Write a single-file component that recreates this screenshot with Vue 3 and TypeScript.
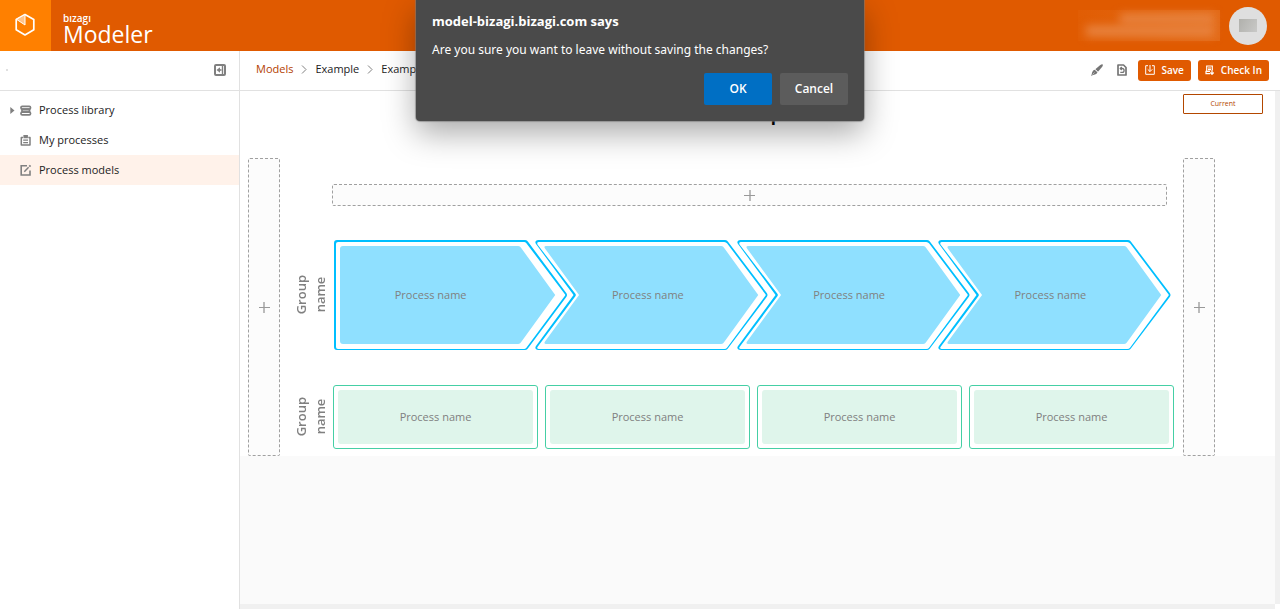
<script setup lang="ts">
interface Chevron {
  outer: string
  gap: string
  fill: string
}

const startShape: Chevron = {
  outer: 'M3 0H191Q193 0 194 2L232 53Q233.500 55 232 57L194 108Q193 110 191 110H3Q0 110 0 107V3Q0 0 3 0Z',
  gap: 'M4 2H190Q191 2 192 3L230.500 54Q231.500 55 230.500 56L192 108Q191 109 190 109H4Q2 109 2 107V4Q2 2 4 2Z',
  fill: 'M9 6H184Q186 6 187 8L221 55L187 102Q186 104 184 104H9Q6 104 6 101V9Q6 6 9 6Z'
}

const nextShape: Chevron = {
  outer: 'M3 0H190Q192 0 193 2L231.500 53Q233 55 231.500 57L193 108Q192 110 190 110H3Q-1 109.500 1 106L38.500 55L1 4Q-1 0.500 3 0Z',
  gap: 'M4 2H189Q191 2 192 3.500L230 54Q231 55 230 56L192 107.500Q191 109 189 109H4Q1.500 109 2.500 107L40.500 56Q41 55 40.500 54L2.500 4.500Q1.500 2 4 2Z',
  fill: 'M11 6H186Q188 6 189 8L223 55L189 102Q188 104 186 104H11Q8.500 104 10 101.500L44 55L10 8.500Q8.500 6 11 6Z'
}

const chevrons = [startShape, nextShape, nextShape, nextShape].map((shape, id) => ({
  id,
  shape,
  name: 'Process name'
}))

const boxes = [0, 1, 2, 3].map((id) => ({ id, name: 'Process name' }))
</script>

<template>
  <div class="app">
    <header class="topbar">
      <a class="logo" href="#" aria-label="Home">
        <svg width="20" height="24" viewBox="0 0 20 24" fill="none">
          <path d="M10 1.500L18.800 6.500V16.700L10 22L1.200 16.700V6.500Z" stroke="#fff" stroke-width="1.700" stroke-linejoin="round" />
          <path d="M1.500 6.300L10 1.500V12Z" fill="#ffc48a" stroke="#fff" stroke-width="1" stroke-linejoin="round" />
        </svg>
      </a>
      <div class="brand">
        <span class="brand-small">bızagı</span>
        <span class="brand-name">Modeler</span>
      </div>
      <div class="account">
        <div class="masked"><i class="line short"></i><i class="line long"></i></div>
        <div class="avatar"><i></i></div>
      </div>
    </header>

    <div class="body">
      <nav class="sidebar">
        <div class="side-head">
          <i class="dot"></i>
          <button class="icon-btn" type="button" aria-label="Collapse panel">
            <svg width="12" height="12" viewBox="0 0 12 12" fill="none" stroke="#808080">
              <rect x="1" y="1" width="10" height="10" rx="1" stroke-width="2" />
              <path d="M8.500 1V11" stroke-width="1.400" />
              <path d="M7.500 6H4" stroke-width="1.600" />
              <path d="M6 3.300V8.700L2.500 6Z" fill="#808080" stroke="none" />
            </svg>
          </button>
        </div>
        <ul class="menu">
          <li>
            <a href="#">
              <svg class="caret" width="5" height="8" viewBox="0 0 5 8"><path d="M0.300 1L4.500 4.500L0.300 8Z" fill="#808080" /></svg>
              <svg class="glyph" width="12" height="12" viewBox="0 0 12 12" fill="none" stroke="#808080" stroke-width="1.700">
                <rect x="1" y="2.300" width="9.500" height="2.800" rx="1.200" />
                <rect x="2" y="5.100" width="7.500" height="3" fill="#b5b5b5" />
                <rect x="1" y="8.100" width="9.500" height="2.800" rx="1.200" />
              </svg>
              <span>Process library</span>
            </a>
          </li>
          <li>
            <a href="#">
              <i class="caret"></i>
              <svg class="glyph" width="12" height="12" viewBox="0 0 12 12" fill="none" stroke="#808080">
                <path d="M3 3.500H1.300V11H10V3.500H8.300" stroke-width="1.500" stroke-linejoin="round" />
                <path d="M4 3.600V1.600H7.300V3.600Z" stroke-width="1.200" fill="#808080" />
                <path d="M3.200 6.200H8M3.200 8.600H8" stroke-width="1.300" />
              </svg>
              <span>My processes</span>
            </a>
          </li>
          <li class="active">
            <a href="#">
              <i class="caret"></i>
              <svg class="glyph" width="12" height="12" viewBox="0 0 12 12" fill="none" stroke="#808080">
                <path d="M7 1.700H1.200V11H10V6.500" stroke-width="1.600" />
                <path d="M4.300 7.800L8.600 3.300" stroke-width="1.500" />
                <path d="M9.300 2.600L10.500 1.300" stroke-width="1.800" />
              </svg>
              <span>Process models</span>
            </a>
          </li>
        </ul>
      </nav>

      <main class="main">
        <div class="toolbar">
          <nav class="crumbs" aria-label="Breadcrumb">
            <a class="root" href="#">Models</a>
            <svg width="6" height="9" viewBox="0 0 6 9" fill="none" stroke="#808080"><path d="M1 0.500L5 4.500L1 8.500" /></svg>
            <a href="#">Example</a>
            <svg width="6" height="9" viewBox="0 0 6 9" fill="none" stroke="#808080"><path d="M1 0.500L5 4.500L1 8.500" /></svg>
            <a href="#">Example</a>
          </nav>
          <div class="actions">
            <button class="icon-btn" type="button" aria-label="Format">
              <svg width="12" height="12" viewBox="0 0 12 12" fill="#757575">
                <path d="M4.300 5.300L9 1.200Q11 -0.200 11.700 0.400Q12.300 1 11 3L7 7.700Z" />
                <path d="M3.800 5.800L6.500 8.300Q5.800 10.300 4 10.500Q2 10.800 0 12Q0.800 10.500 1.100 8.500Q1.800 6 3.800 5.800Z" />
                <path d="M1.500 10.500L3.500 8.500M4.300 5.700L6.700 8" stroke="#fff" stroke-width="0.500" />
              </svg>
            </button>
            <button class="icon-btn" type="button" aria-label="Document">
              <svg width="10" height="12" viewBox="0 0 10 12" fill="none" stroke="#757575">
                <path d="M1 1H6.500L9 3.500V11H1Z" stroke-width="1.700" stroke-linejoin="round" />
                <path d="M3.300 4.500H5.200A1.700 1.700 0 0 1 5.200 8.300H3.300M4.700 3L3.300 4.500L4.700 6" stroke-width="1.300" />
              </svg>
            </button>
            <button class="primary" type="button">
              <svg width="10" height="10" viewBox="0 0 10 10" fill="none" stroke="#fff">
                <path d="M3 0.700H0.700V9.300H9.300V0.700H7" />
                <path d="M5 0V6.500M2.700 4.300L5 6.600L7.300 4.300" />
              </svg>
              <span>Save</span>
            </button>
            <button class="primary" type="button">
              <svg width="10" height="10" viewBox="0 0 10 10" fill="none" stroke="#fff" stroke-width="1.200">
                <path d="M5 8.700H1V6.300H5M1.700 6V1H7.300V5M3 3H6M3 4.700H6" />
                <path d="M7 5V9M5.300 7.500L7 9.300L8.700 7.500" />
              </svg>
              <span>Check In</span>
            </button>
          </div>
        </div>

        <div class="viewport">
          <div class="canvas">
            <div class="canvas-head">
              <h1>Example</h1>
              <button class="current" type="button">Current</button>
            </div>
            <div class="board">
              <button class="add" type="button" aria-label="Add column before"><i class="plus"></i></button>
              <div class="groups">
                <button class="add add-row" type="button" aria-label="Add group"><i class="plus"></i></button>
                <section class="group">
                  <h2>Group<br />name</h2>
                  <div class="chevrons">
                    <div v-for="c in chevrons" :key="c.id" class="chevron">
                      <svg viewBox="0 0 233 110" preserveAspectRatio="none">
                        <path :d="c.shape.outer" fill="#00bfff" />
                        <path :d="c.shape.gap" fill="#fff" />
                        <path :d="c.shape.fill" fill="#8fe0ff" />
                      </svg>
                      <span>{{ c.name }}</span>
                    </div>
                  </div>
                </section>
                <section class="group second">
                  <h2>Group<br />name</h2>
                  <div class="boxes">
                    <div v-for="b in boxes" :key="b.id" class="box"><span>{{ b.name }}</span></div>
                  </div>
                </section>
              </div>
              <button class="add" type="button" aria-label="Add column after"><i class="plus"></i></button>
            </div>
          </div>
          <div class="track-v"></div>
          <div class="track-h"></div>
        </div>
      </main>
    </div>

    <div class="dialog" role="dialog" aria-labelledby="dialog-title">
      <h3 id="dialog-title">model-bizagi.bizagi.com says</h3>
      <p>Are you sure you want to leave without saving the changes?</p>
      <div class="dialog-actions">
        <button class="ok" type="button">OK</button>
        <button type="button">Cancel</button>
      </div>
    </div>
  </div>
</template>

<style>
body {
  margin: 0;
}
</style>

<style scoped>
* {
  box-sizing: border-box;
}

.app {
  position: relative;
  display: flex;
  flex-direction: column;
  min-height: 100vh;
  overflow: hidden;
  background: #fff;
  color: #222;
  font-family: 'Open Sans', 'Noto Sans', sans-serif;
  font-size: 11px;
  line-height: 16px;
}

a {
  color: inherit;
  text-decoration: none;
}

button {
  padding: 0;
  border: 0;
  background: none;
  color: inherit;
  font: inherit;
  cursor: pointer;
}

svg {
  display: block;
  flex: none;
}

.topbar {
  display: flex;
  height: 51px;
  background: #e05a00;
  color: #fff;
}

.logo {
  display: grid;
  place-items: center;
  width: 51px;
  padding: 0 2px 2px 0;
  background: #ff8000;
}

.brand {
  display: flex;
  flex-direction: column;
  padding: 12px 0 0 12px;
}

.brand-small {
  font-size: 10px;
  line-height: 12px;
  font-weight: 600;
}

.brand-name {
  font-size: 23px;
  line-height: 20px;
  font-weight: 500;
}

.account {
  display: flex;
  align-items: center;
  gap: 9px;
  margin-left: auto;
  padding-right: 13px;
}

.masked {
  display: flex;
  flex-direction: column;
  align-items: flex-end;
  gap: 2px;
  width: 142px;
  height: 31px;
  padding: 4px 6px;
  background: linear-gradient(90deg, #e15d04, #e36a17);
}

.line {
  height: 10px;
  background: #e98644;
  filter: blur(5px);
}

.short {
  width: 94px;
}

.long {
  width: 128px;
}

.avatar {
  display: grid;
  place-items: center;
  width: 38px;
  height: 38px;
  border-radius: 50%;
  background: #dfdfdf;
}

.avatar i {
  width: 18px;
  height: 13px;
  background: linear-gradient(120deg, #b0b0ac, #c9c9c7);
}

.body {
  display: flex;
  flex: 1;
}

.sidebar {
  flex: none;
  width: 240px;
  border-right: 1px solid #e1e1e1;
}

.side-head {
  display: flex;
  align-items: center;
  justify-content: space-between;
  height: 40px;
  padding: 0 13px 1px 6px;
  border-bottom: 1px solid #e1e1e1;
}

.dot {
  width: 2px;
  height: 2px;
  background: #e0e0e0;
}

.icon-btn {
  display: grid;
  place-items: center;
}

.menu {
  margin: 0;
  padding: 4px 0 0;
  list-style: none;
  font-weight: 500;
}

.menu a {
  display: flex;
  align-items: center;
  height: 30px;
  padding-left: 10px;
}

.caret {
  width: 5px;
}

.glyph {
  margin: 0 7px 0 5px;
}

.active {
  background: #fff2ea;
}

.main {
  display: flex;
  flex: 1;
  flex-direction: column;
  min-width: 0;
}

.toolbar {
  display: flex;
  align-items: center;
  justify-content: space-between;
  height: 40px;
  padding: 0 11px 1px 16px;
  border-bottom: 1px solid #e1e1e1;
}

.crumbs {
  display: flex;
  align-items: center;
  gap: 8px;
  padding-bottom: 2px;
  font-weight: 500;
}

.root {
  color: #b33e00;
  font-weight: 400;
}

.actions {
  display: flex;
  align-items: center;
}

.actions .icon-btn {
  margin-right: 14px;
}

.actions .icon-btn + .icon-btn {
  margin-right: 11px;
}

.primary {
  display: flex;
  align-items: center;
  gap: 6px;
  height: 21px;
  padding: 0 7px;
  border-radius: 3px;
  background: #e05a00;
  color: #fff;
  font-size: 10px;
  font-weight: 600;
}

.primary + .primary {
  margin-left: 7px;
}

.viewport {
  display: grid;
  flex: 1;
  grid-template-columns: 1fr 5px;
  grid-template-rows: 1fr 5px;
  background: #fff;
}

.canvas {
  background: #fafafa;
}

.track-v,
.track-h {
  background: #f0f0f0;
}

.canvas-head {
  display: grid;
  height: 67px;
  background: #fff;
}

h1 {
  grid-area: 1 / 1;
  justify-self: center;
  margin: 0;
  color: #000;
  font-size: 22px;
  line-height: 40px;
  font-weight: 600;
}

.current {
  grid-area: 1 / 1;
  justify-self: end;
  width: 80px;
  height: 20px;
  margin: 3px 12px 0 0;
  border: 1px solid #b34700;
  border-radius: 1px;
  color: #b34700;
  font-size: 7px;
  font-weight: 500;
}

.board {
  display: flex;
  padding: 0 60px 0 8px;
  background: #fff;
}

.add {
  display: grid;
  flex: none;
  place-items: center;
  width: 32px;
  border: 1px dashed #a0a0a0;
  border-radius: 2px;
  background: #fcfcfc;
}

.plus {
  width: 11px;
  height: 11px;
  background:
    linear-gradient(#999, #999) center / 11px 1px no-repeat,
    linear-gradient(#bbb, #bbb) center / 2px 11px no-repeat;
}

.groups {
  display: flex;
  flex: 1;
  flex-direction: column;
  padding: 26px 9px 7px 12px;
}

.add-row {
  width: auto;
  height: 22px;
  margin: 0 7px 34px 40px;
}

.group {
  display: flex;
  align-items: center;
}

.second {
  margin-top: 35px;
}

h2 {
  width: 38px;
  margin: 0;
  color: #808080;
  font-size: 13px;
  line-height: 19px;
  font-weight: 600;
  text-align: center;
  writing-mode: vertical-rl;
  transform: rotate(180deg);
}

.chevrons {
  display: flex;
  flex: 1;
  margin: 0 3px 0 4px;
}

.chevron {
  display: grid;
  flex: 1 1 0;
  height: 110px;
  color: #808080;
}

.chevron + .chevron {
  margin-left: -32px;
}

.chevron svg {
  grid-area: 1 / 1;
  width: 100%;
  height: 110px;
}

.chevron span {
  z-index: 1;
  grid-area: 1 / 1;
  place-self: center;
  padding-right: 8px;
}

.chevron:first-child span {
  padding-right: 40px;
}

.boxes {
  display: grid;
  flex: 1;
  grid-template-columns: repeat(4, 1fr);
  gap: 7px;
  margin-left: 3px;
}

.box {
  display: grid;
  height: 64px;
  padding: 4px;
  border: 1px solid #45cfa5;
  border-radius: 3px;
  background: #fff;
  color: #808080;
}

.box span {
  display: grid;
  place-items: center;
  border-radius: 3px;
  background: #dff5eb;
}

.dialog {
  position: absolute;
  top: 0;
  left: 50%;
  width: 448px;
  margin-left: -224px;
  padding: 11px 16px 16px;
  border-radius: 0 0 4px 4px;
  background: #4a4a4a;
  color: #fff;
  font-family: 'Noto Sans', 'Open Sans', sans-serif;
  font-size: 12px;
  box-shadow:
    0 0 1px 1px rgba(120, 120, 120, 0.6),
    0 12px 32px rgba(0, 0, 0, 0.34);
}

.dialog h3 {
  margin: 0 0 8px;
  font-family: 'Open Sans', sans-serif;
  font-size: 13px;
  line-height: 20px;
  font-weight: 700;
}

.dialog p {
  margin: 0 0 12px;
  line-height: 22px;
}

.dialog-actions {
  display: flex;
  justify-content: flex-end;
  gap: 8px;
}

.dialog-actions button {
  width: 68px;
  height: 32px;
  border-radius: 2px;
  background: #5c5c5c;
  font-family: 'Open Sans', sans-serif;
  font-weight: 600;
}

.dialog-actions .ok {
  background: #006fc4;
}
</style>
